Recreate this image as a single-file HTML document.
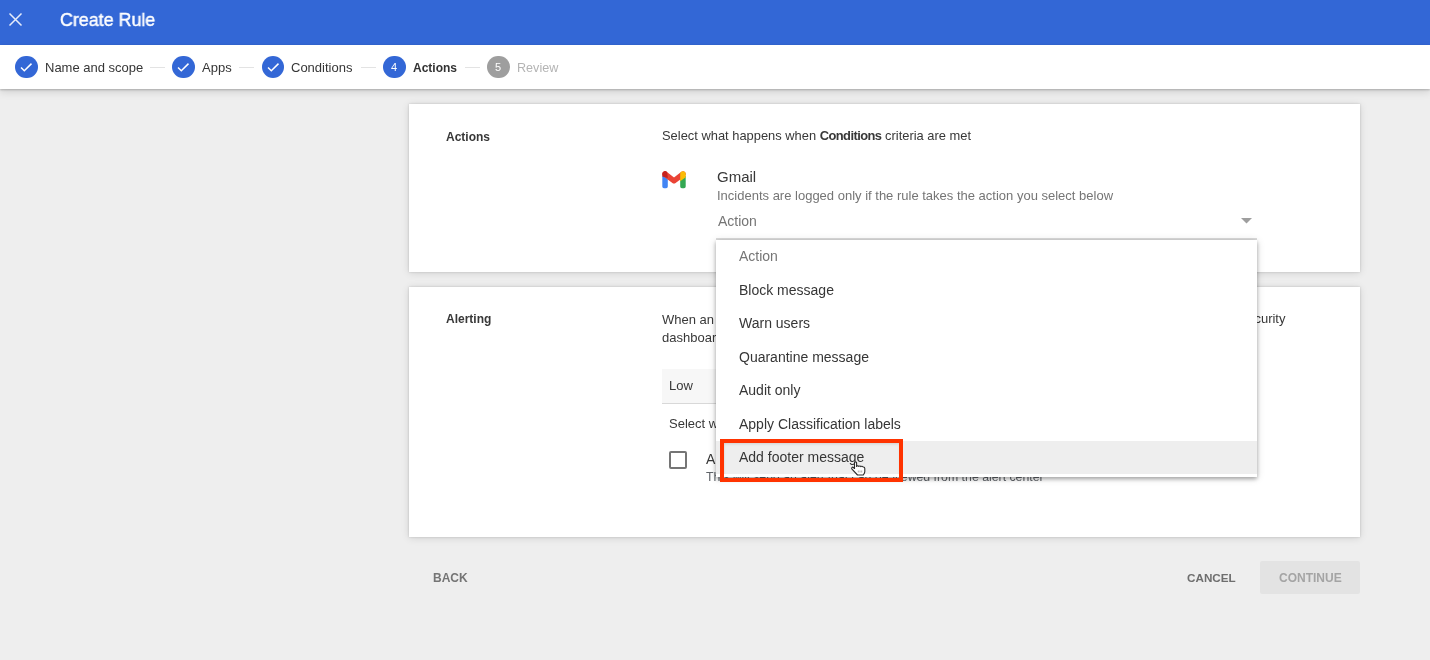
<!DOCTYPE html>
<html><head><meta charset="utf-8">
<style>
*{box-sizing:border-box;margin:0;padding:0}
html,body{width:1430px;height:660px;overflow:hidden;background:#eeeeee;font-family:"Liberation Sans",sans-serif;color:#212121}
.a{position:absolute}
.t{position:absolute;white-space:nowrap;line-height:1;will-change:transform}
#hdr{left:0;top:0;width:1430px;height:45px;background:#3367d6}
#stp{left:0;top:45px;width:1430px;height:44px;background:#fff;box-shadow:0 1px 2px rgba(0,0,0,.22),0 3px 8px rgba(0,0,0,.12)}
.circ{position:absolute;top:55.8px;width:22.6px;height:22.6px;border-radius:50%;background:#3367d6}
.lbl{font-size:13px;top:61px;color:#363636}
.ln{position:absolute;top:67px;height:1px;background:#e3e3e3;width:15px}
.card{position:absolute;left:409px;width:951px;background:#fff;box-shadow:0 0 2px rgba(0,0,0,.16),0 1px 8px rgba(0,0,0,.12)}
.hd{font-size:12px;font-weight:700;color:#383838}
.dd{left:716px;top:240px;width:541px;height:237px;background:#fff;box-shadow:0 2px 4px rgba(0,0,0,.3),0 1px 8px rgba(0,0,0,.15)}
.it{font-size:14px;color:#363636;left:739px}
</style></head><body>
<div id="hdr" class="a"></div>
<svg class="a" style="left:8px;top:11.5px" width="15" height="15" viewBox="0 0 15 15"><path d="M1.5 1.5L13.5 13.5M13.5 1.5L1.5 13.5" stroke="rgba(255,255,255,.88)" stroke-width="1.5" fill="none"/></svg>
<div class="t" style="left:60.2px;top:10.7px;font-size:18.6px;font-weight:400;color:#fff;-webkit-text-stroke:0.45px #fff;transform:scaleX(0.96);transform-origin:0 0">Create Rule</div>

<div id="stp" class="a"></div>
<div class="circ" style="left:15px"></div>
<svg class="a" style="left:15px;top:56px" width="22" height="22" viewBox="0 0 22 22"><path d="M6 11.5l3.3 3.2L16.5 7.6" stroke="#fff" stroke-width="1.5" fill="none"/></svg>
<div class="t lbl" style="left:45px">Name and scope</div>
<div class="ln" style="left:150px"></div>
<div class="circ" style="left:172px"></div>
<svg class="a" style="left:172px;top:56px" width="22" height="22" viewBox="0 0 22 22"><path d="M6 11.5l3.3 3.2L16.5 7.6" stroke="#fff" stroke-width="1.5" fill="none"/></svg>
<div class="t lbl" style="left:202px">Apps</div>
<div class="ln" style="left:239px"></div>
<div class="circ" style="left:261.5px"></div>
<svg class="a" style="left:261.5px;top:56px" width="22" height="22" viewBox="0 0 22 22"><path d="M6 11.5l3.3 3.2L16.5 7.6" stroke="#fff" stroke-width="1.5" fill="none"/></svg>
<div class="t lbl" style="left:291px">Conditions</div>
<div class="ln" style="left:361px"></div>
<div class="circ" style="left:383px"></div>
<div class="t" style="left:383px;top:62px;width:22px;text-align:center;font-size:11px;color:#fff">4</div>
<div class="t lbl" style="left:413px;font-weight:700;font-size:12px;top:62px;color:#333">Actions</div>
<div class="ln" style="left:465px"></div>
<div class="circ" style="left:487px;background:#9e9e9e"></div>
<div class="t" style="left:487px;top:62px;width:22px;text-align:center;font-size:11px;color:#fff">5</div>
<div class="t lbl" style="left:517px;color:#b4b4b4;font-size:12.6px;top:61.6px">Review</div>

<!-- card 1 -->
<div class="card" style="top:104px;height:168px"></div>
<div class="t hd" style="left:446px;top:130.6px">Actions</div>
<div class="t" style="left:661.5px;top:130.2px;font-size:12.9px;color:#383838;letter-spacing:0px">Select what happens when <b style="letter-spacing:-0.55px">Conditions</b> criteria are met</div>
<svg class="a" style="left:662px;top:171px" width="24" height="18" viewBox="0 0 24 18">
<path d="M0.3 5H5.8V15.6A1.7 1.7 0 0 1 4.1 17.3H2A1.7 1.7 0 0 1 0.3 15.6Z" fill="#4285f4"/>
<path d="M18.2 5H23.7V15.6A1.7 1.7 0 0 1 22 17.3H19.9A1.7 1.7 0 0 1 18.2 15.6Z" fill="#34a853"/>
<path d="M3 3L12 9.8L21 3" stroke="#ea4335" stroke-width="5.4" fill="none" stroke-linejoin="round" stroke-linecap="round"/>
<path d="M18.2 3A2.75 2.75 0 0 1 23.7 3V6.2L18.2 10.3Z" fill="#fbbc04"/>
<path d="M0.3 3A2.75 2.75 0 0 1 5.2 1.2L5.8 6.9L0.3 5.5Z" fill="#c5221f"/>
</svg>
<div class="t" style="left:716.5px;top:169px;font-size:15px;color:#383838">Gmail</div>
<div class="t" style="left:716.5px;top:188.7px;font-size:13px;color:#757575">Incidents are logged only if the rule takes the action you select below</div>
<div class="t" style="left:718px;top:214px;font-size:14px;color:#757575">Action</div>
<svg class="a" style="left:1241px;top:218px" width="11" height="6" viewBox="0 0 11 6"><path d="M0 0H11L5.5 5.5Z" fill="#9e9e9e"/></svg>
<div class="a" style="left:716px;top:238px;width:541px;height:2px;background:#dcdcdc"></div>

<!-- card 2 -->
<div class="card" style="top:287px;height:250px"></div>
<div class="t hd" style="left:446.3px;top:313.1px">Alerting</div>
<div class="t" style="left:661.5px;top:312.6px;font-size:13px;color:#383838">When an alert is triggered</div>
<div class="t" style="left:661.5px;top:330.8px;font-size:13px;color:#383838">dashboard</div>
<div class="t" style="left:1100px;width:185.5px;text-align:right;top:312.4px;font-size:13px;color:#383838">center and the security</div>
<div class="a" style="left:662px;top:369px;width:200px;height:35px;background:#f7f7f7;border-bottom:1px solid #d8d8d8"></div>
<div class="t" style="left:669px;top:378.9px;font-size:13px;color:#383838">Low</div>
<div class="t" style="left:669px;top:417.4px;font-size:13px;color:#383838">Select what happens</div>
<div class="a" style="left:669px;top:451px;width:18px;height:18px;border:2px solid #757575;border-radius:2px"></div>
<div class="t" style="left:706px;top:451.5px;font-size:14px;color:#383838">Alert center</div>
<div class="t" style="left:706px;top:471px;font-size:12.3px;color:#5f6368">This will send an alert that can be viewed from the alert center</div>

<!-- footer -->
<div class="t" style="left:433px;top:571.8px;font-size:12px;font-weight:700;color:#757575">BACK</div>
<div class="t" style="left:1187.2px;top:572px;font-size:11.7px;font-weight:700;color:#6e6e6e">CANCEL</div>
<div class="a" style="left:1260px;top:561px;width:100px;height:33px;background:#e3e3e3;border-radius:2px"></div>
<div class="t" style="left:1278.5px;top:572.2px;font-size:12px;font-weight:700;color:#a4a4a4">CONTINUE</div>

<!-- dropdown -->
<div class="a dd"></div>
<div class="a" style="left:716px;top:440.5px;width:541px;height:33px;background:#eeeeee"></div>
<div class="t it" style="top:249.4px;color:#757575">Action</div>
<div class="t it" style="top:282.9px">Block message</div>
<div class="t it" style="top:316.4px">Warn users</div>
<div class="t it" style="top:349.9px">Quarantine message</div>
<div class="t it" style="top:383.4px">Audit only</div>
<div class="t it" style="top:416.9px">Apply Classification labels</div>
<div class="t it" style="top:450.4px">Add footer message</div>
<div class="a" style="left:724px;top:443px;width:175px;height:30.5px;box-shadow:inset 0 2px 3px -1px rgba(0,0,0,.12),inset 2px 0 3px -2px rgba(0,0,0,.08)"></div>
<div class="a" style="left:720px;top:439px;width:183px;height:43px;border:4px solid #ff3300"></div>
<svg class="a" style="left:850px;top:461px" width="16" height="15" viewBox="0 0 16 15"><path d="M4.8 1.2C5.5 0.8 6.6 1 6.6 2V5.5C7 4.6 8.5 4.6 8.7 5.4C9.2 4.7 10.7 4.8 10.8 5.6C11.3 5 12.8 5.1 13 6H13.3C14.3 6 14.8 6.8 14.8 7.5V10.5C14.8 12 14 13 13.3 14H7.5L2 8.2C1 7 2.3 5.6 3.5 6.5L4.5 7.5V2C4.5 1.6 4.6 1.3 4.8 1.2Z" fill="#fff" stroke="#2a2a2a" stroke-width="1.1" stroke-linejoin="round"/><path d="M8.3 9.5V11.5M10 9.5V11.5M11.7 9.5V11.5" stroke="#999" stroke-width="0.8"/></svg>
</body></html>
